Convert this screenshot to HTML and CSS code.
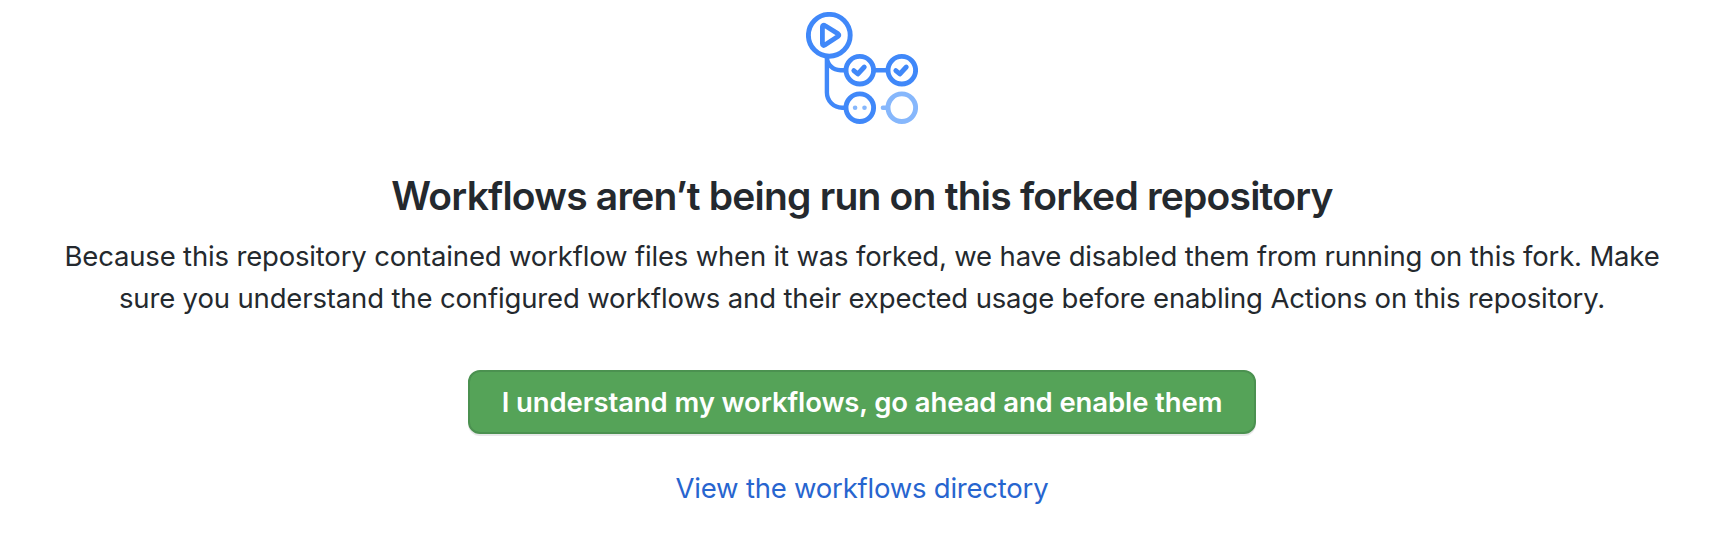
FILE: index.html
```html
<!DOCTYPE html>
<html lang="en">
<head>
<meta charset="utf-8">
<title>Actions</title>
<link rel="stylesheet" href="styles.css">
</head>
<body>
<main class="blankslate">
  <svg class="icon" width="112" height="112" viewBox="0 0 112 112" fill="none" stroke="#4088f9" stroke-width="4.9" stroke-linecap="round" stroke-linejoin="round">
    <path d="M20.900 45V80.500A15.200 15.200 0 0 0 36.100 95.700H39M20.900 45C20.900 52.500 27 58.200 34.500 58.200H39M69 58.200H81" stroke-width="4.400"/>
    <path d="M76.900 95.700H81" stroke="#86b7fc" stroke-width="4.400"/>
    <circle cx="23.300" cy="23.300" r="20.900"/>
    <path d="M18.800 13.500C17.600 12.700 16.400 13.400 16.400 14.800V31.800C16.400 33.200 17.600 33.900 18.800 33.100L32.200 24.300C33.100 23.700 33.100 22.500 32.200 21.900Z" stroke-width="4.800"/>
    <circle cx="53.800" cy="58.200" r="13.800"/>
    <circle cx="95.800" cy="58.200" r="13.800"/>
    <path d="M47.800 58.600L51.800 62L58.300 55M89.800 58.600L93.800 62L100.300 55" stroke-width="4.800"/>
    <circle cx="53.800" cy="95.700" r="13.800"/>
    <circle cx="95.800" cy="95.700" r="13.800" stroke="#86b7fc"/>
    <g fill="#86b7fc" stroke="none"><circle cx="49.100" cy="95.700" r="2.300"/><circle cx="58.500" cy="95.700" r="2.300"/></g>
  </svg>
  <h1 class="title">Workflows aren’t being run on this forked repository</h1>
  <p class="text"><span class="line-one">Because this repository contained workflow files when it was forked, we have disabled them from running on this fork. Make</span><br><span class="line-two">sure you understand the configured workflows and their expected usage before enabling Actions on this repository.</span></p>
  <button class="button" type="button"><span>I understand my workflows, go ahead and enable them</span></button>
  <a class="link" href="#">View the workflows directory</a>
</main>
</body>
</html>
```
FILE: styles.css
```css
body {
  margin: 0;
  background: #fff;
  color: #24292e;
  font-family: Inter, "Liberation Sans", sans-serif;
}
.blankslate {
  display: flex;
  flex-direction: column;
  align-items: center;
  padding: 12px 0 0 6px;
  white-space: nowrap;
}
.icon { display: block; }
.title {
  margin: 42px 0 0;
  font-size: 39px;
  line-height: 60px;
  font-weight: 600;
  letter-spacing: -0.79px;
}
.text {
  margin: 9px 0 0;
  font-size: 27.5px;
  line-height: 42px;
  text-align: center;
}
.line-one { letter-spacing: -0.17px; }
.line-two { letter-spacing: -0.145px; }
.button {
  box-sizing: border-box;
  display: flex;
  align-items: center;
  justify-content: center;
  width: 788px;
  height: 64px;
  margin: 51px 0 0;
  padding: 0;
  border: 2px solid #4b9150;
  border-radius: 12px;
  background: #55a358;
  box-shadow: 0 2px 0 rgba(27, 31, 35, 0.1);
  color: #fff;
  font: 600 27.5px/40px Inter, "Liberation Sans", sans-serif;
  letter-spacing: -0.11px;
}
.link {
  margin-top: 33px;
  color: #2765cf;
  font-size: 27.5px;
  line-height: 42px;
  letter-spacing: -0.22px;
  text-decoration: none;
}
```
